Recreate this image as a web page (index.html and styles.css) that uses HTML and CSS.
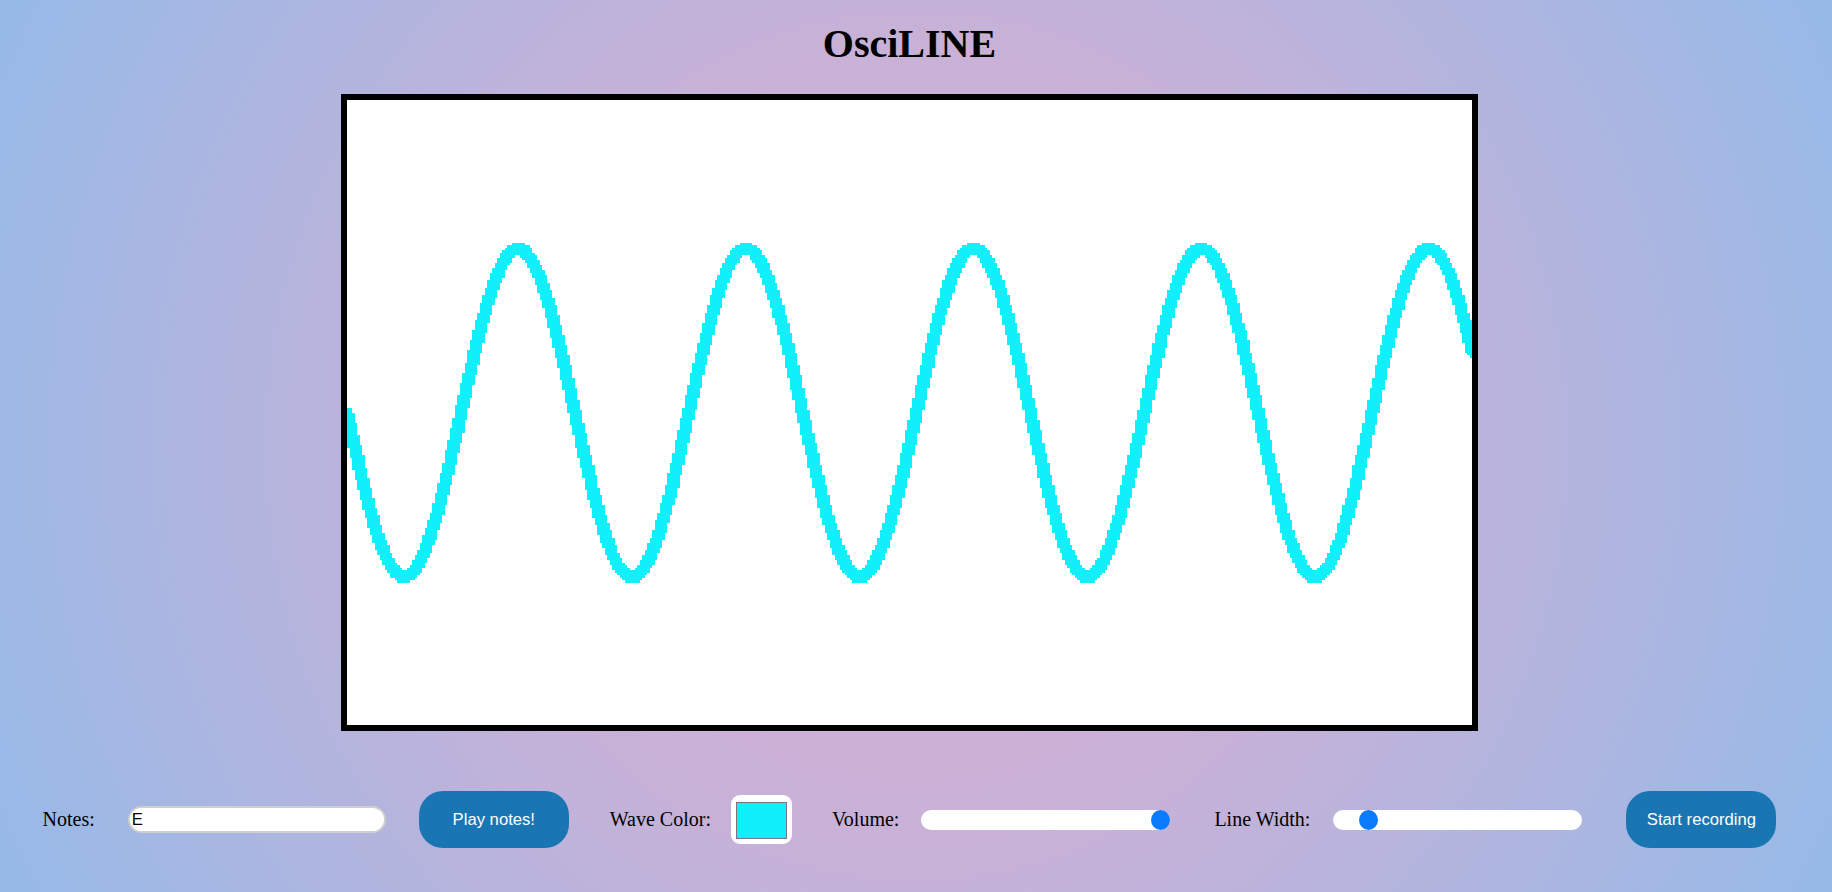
FILE: index.html
```html
<!DOCTYPE html>
<html lang="en">
<head>
<meta charset="utf-8">
<title>OsciLINE</title>
<link rel="stylesheet" href="styles.css">
</head>
<body>
<div class="page">
  <h1 class="title">OsciLINE</h1>
  <canvas id="scope" class="scope" width="450" height="250"></canvas>
  <div class="controls">
    <label class="label label-notes" for="notes">Notes:</label>
    <input class="notes-input" id="notes" type="text" value="E">
    <button class="btn btn-play" type="button">Play notes!</button>
    <label class="label label-color" for="color">Wave Color:</label>
    <input class="color-input" id="color" type="color" value="#10effa">
    <label class="label label-volume" for="volume">Volume:</label>
    <input class="slider slider-volume" id="volume" type="range" min="0" max="100" value="100">
    <label class="label label-width" for="lineWidth">Line Width:</label>
    <input class="slider slider-width" id="lineWidth" type="range" min="1" max="10" value="2">
    <button class="btn btn-record" type="button">Start recording</button>
  </div>
</div>
<script src="script.js"></script>
</body>
</html>
```

FILE: styles.css
```css
html {
  height: 100%;
  background: radial-gradient(circle at 50% 50%, #d8aed2 0%, #c8b1d7 40%, #96bae8 100%);
}

body {
  margin: 0;
  min-height: 100%;
  font-family: "Liberation Serif", "Times New Roman", serif;
  color: #000;
}

.page {
  width: 1819px;
}

.title {
  margin: 20px 0 27px;
  font-size: 40px;
  font-weight: bold;
  text-align: center;
  line-height: normal;
}

.scope {
  display: block;
  margin: 0 auto;
  width: 1125px;
  height: 625px;
  border: 6px solid #000;
  background: #fff;
  image-rendering: pixelated;
}

.controls {
  display: flex;
  align-items: center;
  justify-content: center;
  margin-top: 60px;
}

.label {
  font-size: 20px;
  line-height: normal;
  white-space: nowrap;
}

.notes-input {
  box-sizing: border-box;
  width: 258px;
  height: 27px;
  margin-left: 33px;
  padding: 0 2px;
  border: 2px solid #cfcfcf;
  border-radius: 14px;
  background: #fff;
  font-family: "Liberation Sans", Arial, sans-serif;
  font-size: 16.67px;
  color: #000;
  outline: none;
}

.btn {
  box-sizing: border-box;
  width: 150px;
  height: 57px;
  border: none;
  border-radius: 24px;
  background: #1a76b3;
  color: #fff;
  font-family: "Liberation Sans", Arial, sans-serif;
  font-size: 16.67px;
  padding: 0;
  cursor: pointer;
}

.btn-play {
  margin-left: 33px;
}

.label-color {
  margin-left: 41px;
}

.color-input {
  -webkit-appearance: none;
  appearance: none;
  box-sizing: border-box;
  width: 61px;
  height: 49px;
  margin: 0 0 0 20px;
  padding: 7px 5px 5px 5px;
  border: none;
  border-radius: 9px;
  background: #fff;
  cursor: pointer;
}

.color-input::-webkit-color-swatch-wrapper {
  padding: 0;
}

.color-input::-webkit-color-swatch {
  border: 1px solid #777;
  border-radius: 0;
}

.label-volume {
  margin-left: 40px;
}

.slider {
  -webkit-appearance: none;
  appearance: none;
  width: 249px;
  height: 20px;
  margin: 0;
  padding: 0;
  border-radius: 10px;
  background: #fff;
  outline: none;
}

.slider::-webkit-slider-thumb {
  -webkit-appearance: none;
  appearance: none;
  width: 19px;
  height: 20px;
  border: none;
  border-radius: 50%;
  background: #0a7bff;
  cursor: pointer;
}

.slider-volume {
  margin-left: 22px;
}

.label-width {
  margin-left: 44px;
}

.slider-width {
  margin-left: 23px;
}

.btn-record {
  margin-left: 44px;
}
```

FILE: script.js
```js
(function () {
  var canvas = document.getElementById('scope');
  var ctx = canvas.getContext('2d');
  var w = canvas.width;
  var h = canvas.height;
  var hex = document.getElementById('color').value;
  var r = parseInt(hex.substr(1, 2), 16);
  var g = parseInt(hex.substr(3, 2), 16);
  var b = parseInt(hex.substr(5, 2), 16);
  var period = 91.1;
  var amp = 65.6;
  var half = 2.55;
  var step = 0.1;
  var pad = 5;

  function f(x) {
    return h / 2 + amp * Math.sin((2 * Math.PI * x) / period);
  }

  var samples = [];
  for (var s = -pad; s <= w + pad; s += step) {
    samples.push([s, f(s)]);
  }

  var img = ctx.createImageData(w, h);
  var data = img.data;
  for (var py = 0; py < h; py++) {
    for (var px = 0; px < w; px++) {
      var cx = px + 0.5;
      var cy = py + 0.5;
      var hit = false;
      var start = Math.max(0, Math.floor((cx - 3 + pad) / step));
      var end = Math.min(samples.length - 1, Math.ceil((cx + 3 + pad) / step));
      for (var i = start; i <= end; i++) {
        if (samples[i][0] < 0 || samples[i][0] > w) {
          continue;
        }
        var dx = samples[i][0] - cx;
        var dy = samples[i][1] - cy;
        if (dx * dx + dy * dy <= half * half) {
          hit = true;
          break;
        }
      }
      var k = (py * w + px) * 4;
      if (hit) {
        data[k] = r;
        data[k + 1] = g;
        data[k + 2] = b;
      } else {
        data[k] = 255;
        data[k + 1] = 255;
        data[k + 2] = 255;
      }
      data[k + 3] = 255;
    }
  }
  ctx.putImageData(img, 0, 0);
})();
```
